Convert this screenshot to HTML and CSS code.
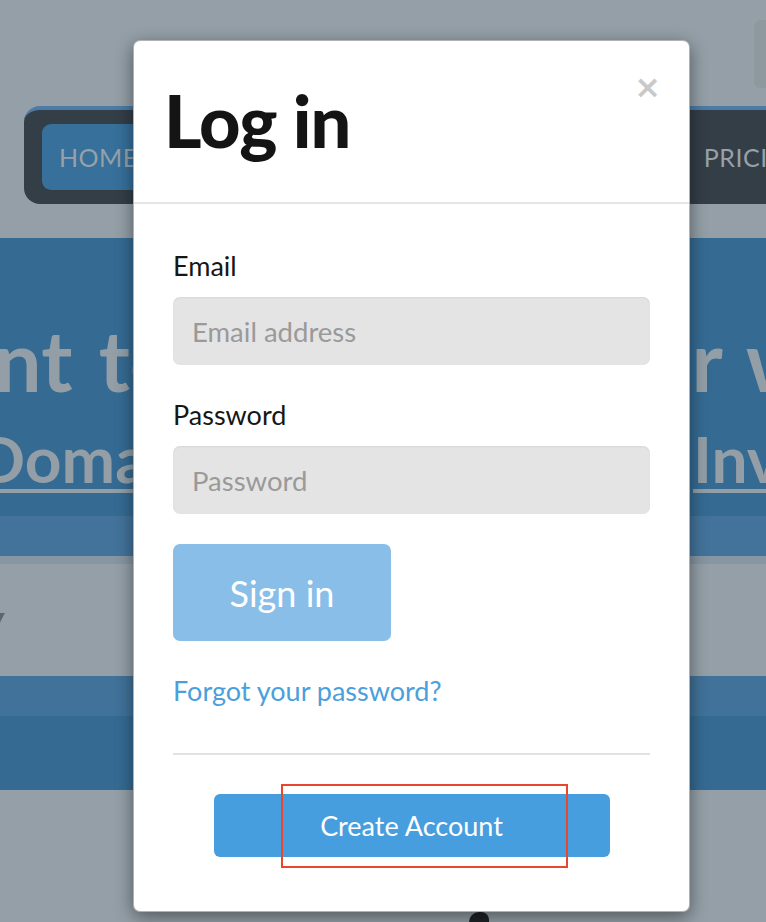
FILE: index.html
```html
<!DOCTYPE html>
<html lang="en">
<head>
    <meta charset="UTF-8">
    <meta name="viewport" content="width=device-width, initial-scale=1.0">
    <title>Log in</title>
    <link rel="stylesheet" href="styles.css">
</head>
<body>

    <div class="page">
        <div class="top-bar">
            <div class="top-box"></div>
        </div>

        <div class="nav">
            <a class="nav-link active" href="#">HOME</a>
            <a class="nav-link pricing" href="#">PRICING</a>
        </div>

        <div class="hero">
            <div class="hero-line big">
                <div class="hero-left"><span>Want to</span></div>
                <div class="hero-right"><span>your website</span></div>
            </div>
            <div class="hero-line link">
                <div class="hero-left"><a href="#">Domain</a></div>
                <div class="hero-right"><a href="#">Investors</a></div>
            </div>
        </div>
        <div class="hero-band"></div>
        <div class="hero-edge"></div>

        <div class="section">
            <span class="section-text">y</span>
        </div>

        <div class="footer-band light"></div>
        <div class="footer-band"></div>
        <div class="rest">
            <div class="blob"></div>
        </div>
    </div>

    <!-- login modal -->
    <div class="modal">
        <div class="modal-header">
            <h1>Log in</h1>
            <button class="close" type="button">&times;</button>
        </div>
        <form class="modal-body">
            <div class="form-group">
                <label for="email">Email</label>
                <input type="text" id="email" placeholder="Email address">
            </div>
            <div class="form-group">
                <label for="password">Password</label>
                <input type="password" id="password" placeholder="Password">
            </div>
            <button class="btn-signin" type="button">Sign in</button>
            <a class="forgot" href="#">Forgot your password?</a>
            <hr>
            <div class="create-row">
                <button class="btn-create" type="button">Create Account</button>
                <div class="highlight"></div>
            </div>
        </form>
    </div>

</body>
</html>
```

FILE: styles.css
```css
html, body {
    margin: 0;
    padding: 0;
}

body {
    font-family: 'Lato', 'Noto Sans', sans-serif;
    background-color: #949fa7;
    height: 922px;
    overflow: hidden;
    position: relative;
}

/* page behind the modal (already dimmed) */
.page {
    width: 100%;
}

.top-bar {
    height: 106px;
    display: flex;
    justify-content: flex-end;
    align-items: flex-start;
}

.top-box {
    width: 40px;
    height: 68px;
    margin-top: 20px;
    margin-right: -28px;
    background-color: #8e989f;
    border-radius: 7px;
}

.nav {
    height: 94px;
    margin-left: 24px;
    background-color: #343e47;
    border-top: 4px solid #4b7ba6;
    border-radius: 16px 0 0 16px;
    display: flex;
    align-items: center;
    justify-content: space-between;
    padding-left: 18px;
}

.nav-link {
    color: #96a1a9;
    text-decoration: none;
    font-size: 25px;
    letter-spacing: 0.5px;
}

.nav-link.active {
    background-color: #36709b;
    height: 66px;
    line-height: 66px;
    padding: 0 40px 0 17px;
    border-radius: 9px;
}

.nav-link.pricing {
    margin-right: -40px;
}

.hero {
    margin-top: 34px;
    height: 278px;
    background-color: #356b93;
    overflow: hidden;
}

.hero-line {
    display: flex;
    justify-content: space-between;
    white-space: nowrap;
    color: #939ea6;
    font-weight: 700;
}

.hero-line.big {
    font-size: 84px;
    margin-top: 71px;
    height: 111px;
    word-spacing: 6px;
}

.hero-line.link {
    font-size: 64px;
    height: 90px;
}

.hero-line a {
    color: #939ea6;
    text-decoration: underline;
    text-decoration-thickness: 4px;
    text-underline-offset: 6px;
}

.hero-left {
    display: flex;
    justify-content: flex-end;
}

.hero-right {
    display: flex;
    justify-content: flex-start;
}

.big .hero-left {
    width: 178px;
}

.big .hero-right {
    width: 213px;
}

.link .hero-left {
    width: 200px;
}

.link .hero-right {
    width: 73px;
}

.hero-band {
    height: 40px;
    background-color: #43739b;
}

.hero-edge {
    height: 8px;
    background-color: #8696a2;
}

.section {
    height: 112px;
    display: flex;
    align-items: center;
}

.section-text {
    color: #5b666e;
    font-size: 52px;
    font-weight: 700;
    font-style: italic;
    margin-left: -22px;
}

.footer-band {
    height: 74px;
    background-color: #356b93;
}

.footer-band.light {
    height: 40px;
    background-color: #41729a;
}

.rest {
    height: 132px;
    display: flex;
    justify-content: center;
    align-items: flex-end;
}

.blob {
    width: 20px;
    height: 12px;
    margin-left: 192px;
    margin-bottom: -2px;
    background-color: #1f2327;
    border-radius: 10px 8px 0 0;
}

/* modal */
.modal {
    position: absolute;
    left: 133px;
    top: 40px;
    width: 555px;
    height: 870px;
    background-color: #fff;
    border: 1px solid rgba(0, 0, 0, 0.3);
    border-radius: 7px;
    box-shadow: 0 5px 18px rgba(0, 0, 0, 0.45);
    display: flex;
    flex-direction: column;
}

.modal-header {
    height: 161px;
    border-bottom: 2px solid #e5e5e5;
    display: flex;
    justify-content: space-between;
    align-items: flex-start;
    padding: 0 28px 0 30px;
}

.modal-header h1 {
    margin: 36px 0 0;
    font-size: 72px;
    font-weight: 900;
    color: #141414;
    letter-spacing: -1px;
    line-height: 86px;
}

.close {
    margin-top: 30px;
    border: none;
    background: none;
    padding: 0;
    font-family: 'DejaVu Sans', sans-serif;
    font-size: 32px;
    font-weight: 700;
    color: #c9c9c9;
    line-height: 32px;
}

.modal-body {
    padding: 47px 39px 0;
    display: flex;
    flex-direction: column;
    align-items: flex-start;
}

.form-group {
    width: 100%;
    display: flex;
    flex-direction: column;
    margin-bottom: 35px;
}

.form-group label {
    font-size: 27px;
    line-height: 30px;
    color: #161616;
    margin-bottom: 16px;
}

.form-group input {
    height: 68px;
    border: none;
    border-radius: 7px;
    background-color: #e4e4e4;
    box-shadow: inset 0 1px 2px rgba(0, 0, 0, 0.06);
    padding: 0 19px;
    font-family: inherit;
    font-size: 27.5px;
    color: #333;
}

.form-group input::placeholder {
    color: #9a9a9a;
}

.btn-signin {
    width: 218px;
    height: 97px;
    margin-top: -5px;
    border: none;
    border-radius: 7px;
    background-color: #89bee8;
    color: #fff;
    font-family: inherit;
    font-size: 36px;
}

.forgot {
    margin-top: 35px;
    font-size: 27px;
    line-height: 30px;
    color: #4a9fdc;
    text-decoration: none;
}

.modal-body hr {
    width: 100%;
    margin: 47px 0 0;
    border: none;
    border-top: 2px solid #e2e2e2;
}

.create-row {
    width: 100%;
    display: flex;
    justify-content: center;
    margin-top: 39px;
    position: relative;
}

.btn-create {
    width: 396px;
    height: 63px;
    border: none;
    border-radius: 6px;
    background-color: #479ede;
    color: #fff;
    font-family: inherit;
    font-size: 27px;
}

/* red annotation box */
.highlight {
    position: absolute;
    left: 108px;
    top: -10px;
    width: 283px;
    height: 80px;
    border: 2px solid #e9472c;
}
```
